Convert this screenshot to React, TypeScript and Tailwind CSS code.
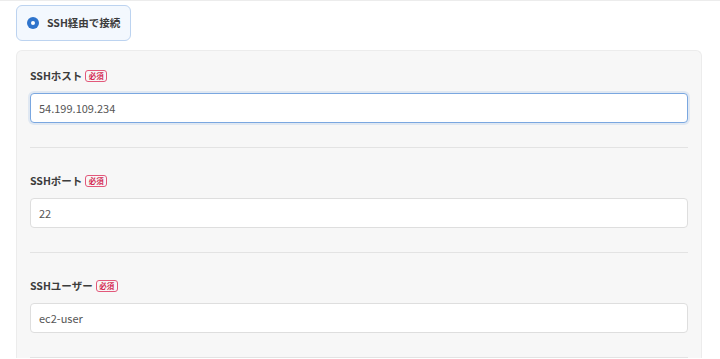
import type { ReactNode } from 'react';

const font = { fontFamily: '"Noto Sans CJK JP", "Noto Sans", sans-serif' };

function Required() {
    return (
        <span className="ml-[3px] inline-flex h-[12px] w-[22px] items-center justify-center rounded-[3px] border border-[#e2587a] text-[7.5px] font-bold leading-none text-[#d42a52]">
            必須
        </span>
    );
}

interface FieldProps {
    label: string;
    value: string;
    focused?: boolean;
    first?: boolean;
}

function Field({ label, value, focused, first }: FieldProps) {
    return (
        <div className={`border-b border-[#e3e3e3] pb-6 ${first ? 'pt-4' : 'pt-6'}`}>
            <div className="mb-2 flex h-[18px] items-center text-[10.5px] font-semibold text-[#3c3c3c]">
                {label}
                <Required />
            </div>
            <div
                className={`flex h-[30px] items-center rounded-[4px] bg-white px-[8px] text-[11px] text-[#555] ${focused
                    ? 'border border-[#7aa7e0] shadow-[0_0_0_2px_rgba(122,167,224,0.18)]'
                    : 'border border-[#dedede]'
                    }`}
            >
                {value}
            </div>
        </div>
    );
}

function Panel({ children }: { children: ReactNode }) {
    return (
        <div className="ml-4 mt-[9px] w-[686px] rounded-t-[6px] border border-b-0 border-[#ececec] bg-[#f7f7f7] px-[13px]">
            {children}
        </div>
    );
}

export default function App() {
    return (
        <div className="h-[359px] w-[720px] overflow-hidden border-t border-[#ececec] bg-white" style={font}>
            {/* connection type */}
            <div className="ml-4 mt-1 flex h-[36px] w-[115px] items-center gap-[8px] rounded-[6px] border border-[#bcd3f0] bg-[#f3f8fe] pl-[10px]">
                <span className="flex h-[12px] w-[12px] items-center justify-center rounded-full bg-[#2f74cc]">
                    <span className="h-[4px] w-[4px] rounded-full bg-white" />
                </span>
                <span className="whitespace-nowrap text-[10.5px] font-semibold text-[#3c3c3c]">SSH経由で接続</span>
            </div>

            <Panel>
                <Field label="SSHホスト" value="54.199.109.234" focused first />
                <Field label="SSHポート" value="22" />
                <Field label="SSHユーザー" value="ec2-user" />
            </Panel>
        </div>
    );
}
